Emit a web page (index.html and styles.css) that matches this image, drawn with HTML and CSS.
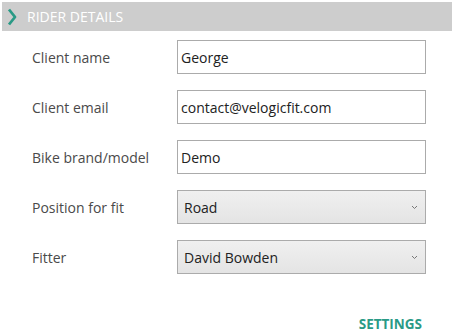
FILE: index.html
```html
<!DOCTYPE html>
<html>
<head>
<meta charset="utf-8">
<link rel="stylesheet" href="styles.css">
</head>
<body>
<div class="panel">
  <div class="header">
    <svg class="chev" width="10" height="18" viewBox="0 0 10 18"><path d="M2 1.5 L8 9 L2 16.5" fill="none" stroke="#2a9a86" stroke-width="2.8" stroke-linejoin="round"/></svg>
    <span class="title">RIDER DETAILS</span>
  </div>
  <div class="form">
    <div class="row"><span class="label">Client name</span><div class="field">George</div></div>
    <div class="row"><span class="label">Client email</span><div class="field">contact@velogicfit.com</div></div>
    <div class="row"><span class="label">Bike brand/model</span><div class="field">Demo</div></div>
    <div class="row"><span class="label">Position for fit</span><div class="field select">Road<svg class="arrow" width="7" height="5" viewBox="0 0 7 5"><path d="M1 1 L3.5 3.5 L6 1" fill="none" stroke="#777" stroke-width="1"/></svg></div></div>
    <div class="row"><span class="label">Fitter</span><div class="field select">David Bowden<svg class="arrow" width="7" height="5" viewBox="0 0 7 5"><path d="M1 1 L3.5 3.5 L6 1" fill="none" stroke="#777" stroke-width="1"/></svg></div></div>
  </div>
  <div class="footer"><span class="settings">SETTINGS</span></div>
</div>
</body>
</html>
```
FILE: styles.css
```css
html, body {
  margin: 0;
  padding: 0;
  background: #ffffff;
}
body {
  width: 455px;
  height: 332px;
  overflow: hidden;
  font-family: "Open Sans", "Noto Sans", sans-serif;
}
.panel {
  padding: 2px 3px 0 2px;
}
.header {
  height: 29px;
  background: #cdcdcd;
  display: flex;
  align-items: center;
}
.chev {
  margin-left: 5px;
  margin-right: 10px;
}
.title {
  color: #ffffff;
  font-size: 14px;
}
.form {
  display: flex;
  flex-direction: column;
  gap: 16px;
  padding-top: 9px;
}
.row {
  display: flex;
  align-items: center;
  height: 34px;
}
.label {
  width: 145px;
  padding-left: 30px;
  font-size: 14px;
  color: #4a4a4a;
}
.field {
  box-sizing: border-box;
  width: 249px;
  height: 34px;
  border: 1px solid #ababab;
  background: #ffffff;
  display: flex;
  align-items: center;
  padding-left: 3px;
  font-size: 14px;
  color: #222222;
}
.select {
  background: linear-gradient(#f0f0f0, #e4e4e4);
  padding-left: 6px;
  justify-content: space-between;
  padding-right: 7px;
}
.footer {
  display: flex;
  justify-content: flex-end;
  padding-right: 30px;
  padding-top: 41px;
}
.settings {
  font-weight: 700;
  font-size: 13.5px;
  color: #2a9a86;
}
```
